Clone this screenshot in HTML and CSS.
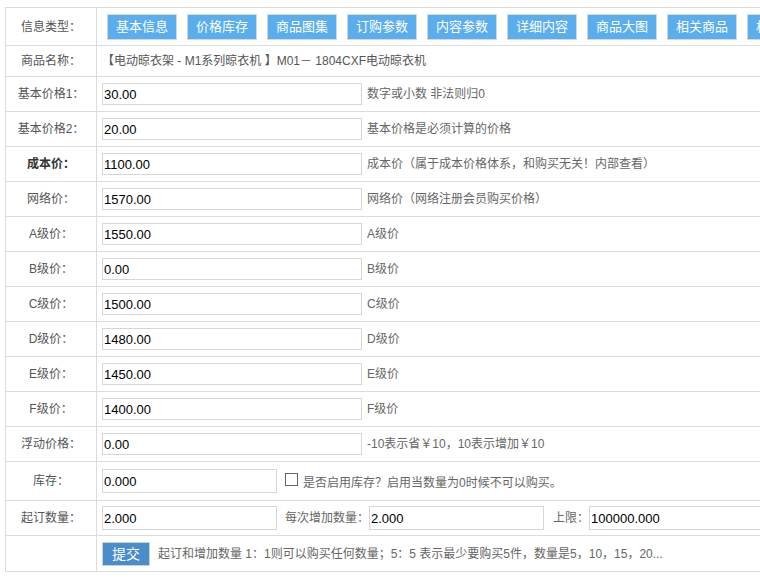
FILE: index.html
```html
<!DOCTYPE html>
<html lang="zh-CN">
<head>
<meta charset="utf-8">
<title>商品编辑</title>
<link rel="stylesheet" href="styles.css">
</head>
<body>
<div class="form">
  <div class="row r-tabs">
    <div class="label">信息类型：</div>
    <div class="cell tabs">
      <span class="tab">基本信息</span>
      <span class="tab">价格库存</span>
      <span class="tab">商品图集</span>
      <span class="tab">订购参数</span>
      <span class="tab">内容参数</span>
      <span class="tab">详细内容</span>
      <span class="tab">商品大图</span>
      <span class="tab">相关商品</span>
      <span class="tab">相关文章</span>
    </div>
  </div>
  <div class="row r-name">
    <div class="label">商品名称：</div>
    <div class="cell name">【电动晾衣架 - M1系列晾衣机 】M01－ 1804CXF电动晾衣机</div>
  </div>
  <div class="row">
    <div class="label">基本价格1：</div>
    <div class="cell"><input class="inp" type="text" value="30.00"><span class="hint">数字或小数 非法则归0</span></div>
  </div>
  <div class="row">
    <div class="label">基本价格2：</div>
    <div class="cell"><input class="inp" type="text" value="20.00"><span class="hint">基本价格是必须计算的价格</span></div>
  </div>
  <div class="row">
    <div class="label strong">成本价：</div>
    <div class="cell"><input class="inp" type="text" value="1100.00"><span class="hint">成本价（属于成本价格体系，和购买无关！内部查看）</span></div>
  </div>
  <div class="row">
    <div class="label">网络价：</div>
    <div class="cell"><input class="inp" type="text" value="1570.00"><span class="hint">网络价（网络注册会员购买价格）</span></div>
  </div>
  <div class="row">
    <div class="label">A级价：</div>
    <div class="cell"><input class="inp" type="text" value="1550.00"><span class="hint">A级价</span></div>
  </div>
  <div class="row">
    <div class="label">B级价：</div>
    <div class="cell"><input class="inp" type="text" value="0.00"><span class="hint">B级价</span></div>
  </div>
  <div class="row">
    <div class="label">C级价：</div>
    <div class="cell"><input class="inp" type="text" value="1500.00"><span class="hint">C级价</span></div>
  </div>
  <div class="row">
    <div class="label">D级价：</div>
    <div class="cell"><input class="inp" type="text" value="1480.00"><span class="hint">D级价</span></div>
  </div>
  <div class="row">
    <div class="label">E级价：</div>
    <div class="cell"><input class="inp" type="text" value="1450.00"><span class="hint">E级价</span></div>
  </div>
  <div class="row">
    <div class="label">F级价：</div>
    <div class="cell"><input class="inp" type="text" value="1400.00"><span class="hint">F级价</span></div>
  </div>
  <div class="row">
    <div class="label">浮动价格：</div>
    <div class="cell"><input class="inp" type="text" value="0.00"><span class="hint">-10表示省￥10，10表示增加￥10</span></div>
  </div>
  <div class="row r-stock">
    <div class="label">库存：</div>
    <div class="cell"><input class="inp short" type="text" value="0.000"><span class="chk"></span><span class="hint tight">是否启用库存？启用当数量为0时候不可以购买。</span></div>
  </div>
  <div class="row">
    <div class="label">起订数量：</div>
    <div class="cell"><input class="inp short" type="text" value="2.000"><span class="hint gap8">每次增加数量：</span><input class="inp short" type="text" value="2.000"><span class="hint gap9">上限：</span><input class="inp short wide" type="text" value="100000.000"></div>
  </div>
  <div class="row r-submit">
    <div class="label"></div>
    <div class="cell"><span class="submit">提交</span><span class="hint gap8">起订和增加数量 1：1则可以购买任何数量；5：5 表示最少要购买5件，数量是5，10，15，20...</span></div>
  </div>
</div>
</body>
</html>
```

FILE: styles.css
```css
html, body {
  overflow: hidden;
}
body {
  margin: 7px 0 0 5px;
  font-family: "Liberation Sans", "Noto Sans CJK SC", sans-serif;
  font-size: 12px;
  color: #555;
  background: #fff;
}
.form {
  width: 1000px;
  border-top: 1px solid #dcdcdc;
  border-left: 1px solid #dcdcdc;
}
.row {
  display: flex;
  height: 34px;
  border-bottom: 1px solid #dcdcdc;
}
.r-tabs { height: 37px; }
.r-name { height: 30px; }
.r-stock { height: 38px; }
.r-submit { height: 35px; }
.label {
  width: 90px;
  flex: none;
  border-right: 1px solid #dcdcdc;
  display: flex;
  align-items: center;
  justify-content: center;
  line-height: 16px;
  color: #555;
}
.label.strong {
  font-weight: bold;
  color: #333;
}
.cell {
  flex: 1;
  display: flex;
  align-items: center;
  padding-left: 5px;
  white-space: nowrap;
  line-height: 16px;
}
.tabs {
  padding-left: 10px;
  gap: 10px;
}
.tab {
  box-sizing: border-box;
  width: 70px;
  height: 26px;
  flex: none;
  background: #5aaeee;
  border: 1px solid #d8d8d8;
  color: #fff;
  font-size: 13px;
  display: flex;
  align-items: center;
  justify-content: center;
}
.name {
  color: #555;
}
.inp {
  box-sizing: border-box;
  width: 260px;
  height: 22px;
  margin: 0;
  padding: 0 1px;
  border: 1px solid #d6d6d6;
  font-family: "Liberation Sans", "Noto Sans CJK SC", sans-serif;
  font-size: 13px;
  color: #000;
  outline: none;
  flex: none;
}
.inp.short {
  width: 175px;
  height: 24px;
}
.inp.wide {
  width: 200px;
}
.hint {
  margin-left: 5px;
  color: #666;
}
.hint.tight {
  margin-left: 5px;
  margin-top: 4px;
}
.hint.gap8 { margin-left: 8px; }
.hint.gap9 { margin-left: 9px; }
.chk {
  box-sizing: border-box;
  width: 13px;
  height: 13px;
  margin-left: 8px;
  margin-bottom: 4px;
  border: 1px solid #666;
  background: #fff;
  flex: none;
}
.submit {
  box-sizing: border-box;
  width: 48px;
  height: 24px;
  background: #4a8dcc;
  border: 1px solid #d0d0d0;
  color: #fff;
  font-size: 14px;
  display: flex;
  align-items: center;
  justify-content: center;
  flex: none;
}
```
